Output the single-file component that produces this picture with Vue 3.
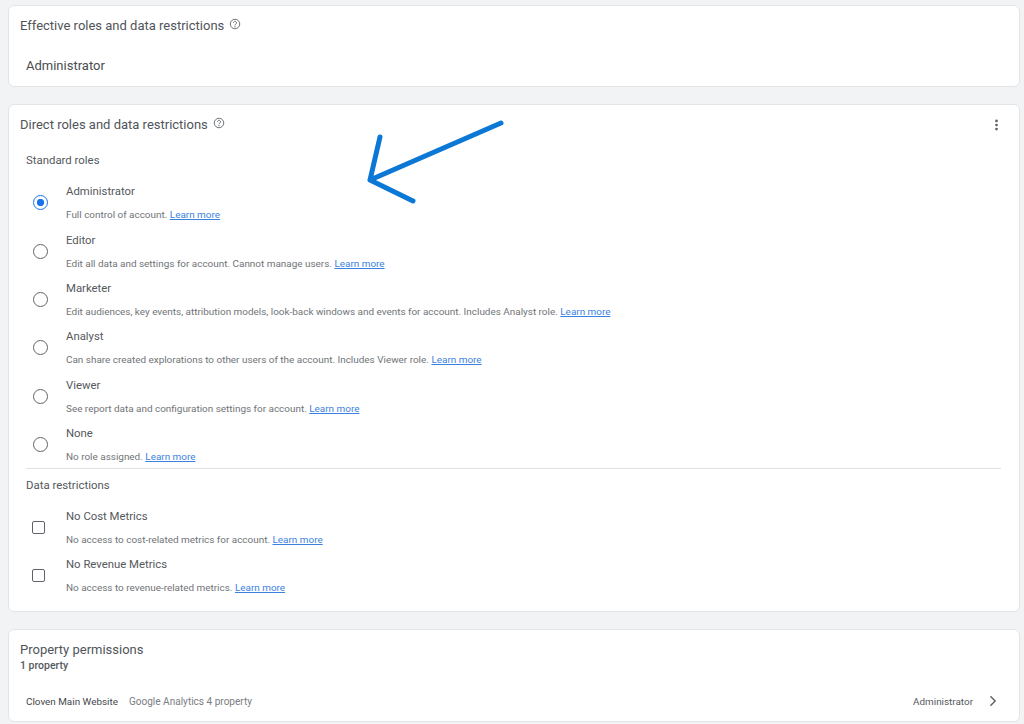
<script setup>
const roles = [
  { name: 'Administrator', desc: 'Full control of account.', checked: true },
  { name: 'Editor', desc: 'Edit all data and settings for account. Cannot manage users.' },
  { name: 'Marketer', desc: 'Edit audiences, key events, attribution models, look-back windows and events for account. Includes Analyst role.' },
  { name: 'Analyst', desc: 'Can share created explorations to other users of the account. Includes Viewer role.' },
  { name: 'Viewer', desc: 'See report data and configuration settings for account.' },
  { name: 'None', desc: 'No role assigned.' },
]
const restrictions = [
  { name: 'No Cost Metrics', desc: 'No access to cost-related metrics for account.' },
  { name: 'No Revenue Metrics', desc: 'No access to revenue-related metrics.' },
]
</script>

<template>
  <div class="page">
    <section class="card card-effective">
      <div class="title-row">
        <h2 class="title">Effective roles and data restrictions</h2>
        <svg class="help" viewBox="0 0 24 24"><circle cx="12" cy="12" r="9.5" fill="none" stroke="#5f6368" stroke-width="1.8"/><path d="M9 9.6a3 3 0 1 1 4.7 2.5c-1 .7-1.7 1.2-1.7 2.6" fill="none" stroke="#5f6368" stroke-width="1.8"/><circle cx="12" cy="17.4" r="1.2" fill="#5f6368"/></svg>
      </div>
      <div class="effective-value">Administrator</div>
    </section>

    <section class="card card-direct">
      <div class="title-row">
        <h2 class="title">Direct roles and data restrictions</h2>
        <svg class="help" viewBox="0 0 24 24"><circle cx="12" cy="12" r="9.5" fill="none" stroke="#5f6368" stroke-width="1.8"/><path d="M9 9.6a3 3 0 1 1 4.7 2.5c-1 .7-1.7 1.2-1.7 2.6" fill="none" stroke="#5f6368" stroke-width="1.8"/><circle cx="12" cy="17.4" r="1.2" fill="#5f6368"/></svg>
        <svg class="more" viewBox="0 0 4 14"><circle cx="2" cy="2.2" r="1.6"/><circle cx="2" cy="7" r="1.6"/><circle cx="2" cy="11.8" r="1.6"/></svg>
      </div>
      <h3 class="section-label">Standard roles</h3>
      <div class="options">
        <div v-for="r in roles" :key="r.name" class="option">
          <span class="radio" :class="{ on: r.checked }"></span>
          <div class="option-text">
            <div class="option-name">{{ r.name }}</div>
            <div class="option-desc">{{ r.desc }} <a class="link">Learn more</a></div>
          </div>
        </div>
      </div>
      <div class="divider"></div>
      <h3 class="section-label data-label">Data restrictions</h3>
      <div class="options data-options">
        <div v-for="r in restrictions" :key="r.name" class="option">
          <span class="checkbox"></span>
          <div class="option-text">
            <div class="option-name">{{ r.name }}</div>
            <div class="option-desc">{{ r.desc }} <a class="link">Learn more</a></div>
          </div>
        </div>
      </div>
    </section>

    <section class="card card-property">
      <h2 class="title prop-title">Property permissions</h2>
      <div class="prop-count">1 property</div>
      <div class="prop-row">
        <span class="prop-name">Cloven Main Website</span>
        <span class="prop-type">Google Analytics 4 property</span>
        <span class="prop-role">Administrator</span>
        <svg class="chevron" viewBox="0 0 10 14"><path d="M2 1.5 7.5 7 2 12.5" fill="none" stroke="#5f6368" stroke-width="1.7"/></svg>
      </div>
    </section>

    <svg class="arrow" viewBox="0 0 1024 724">
      <path d="M501 123 370 180M380 137 370 180 413 201" fill="none" stroke="#0b78d6" stroke-width="5" stroke-linecap="round" stroke-linejoin="round"/>
    </svg>
  </div>
</template>

<style>
html, body { margin: 0; background: #f1f3f4; }
</style>

<style scoped>
.page {
  position: relative;
  box-sizing: border-box;
  width: 1024px;
  height: 724px;
  padding: 5px 4px 0 8px;
  overflow: hidden;
  background: #f1f3f4;
  font-family: Roboto, "Liberation Sans", sans-serif;
  color: #3c4043;
  display: flex;
  flex-direction: column;
  gap: 17px;
}
.card {
  box-sizing: border-box;
  flex: none;
  background: #fff;
  border: 1px solid #e2e4e7;
  border-radius: 6px;
  padding: 0 12px 0 11px;
}
.card-effective { height: 82px; }
.card-direct { height: 508px; }
.card-property { height: 93px; }
.title-row {
  display: flex;
  align-items: center;
  height: 39px;
}
.title {
  margin: 0;
  font-size: 13px;
  font-weight: 400;
  line-height: 39px;
  color: #50545a;
}
.help { width: 12px; height: 12px; margin: -3px 0 0 5px; }
.more { width: 5px; height: 12px; margin: 1px 8px 0 auto; fill: #5f6368; }
.effective-value {
  margin: 11px 0 0 6px;
  font-size: 13px;
  line-height: 20px;
  color: #4a4d51;
}
.section-label {
  margin: 0 0 0 6px;
  font-size: 11.4px;
  font-weight: 400;
  line-height: 16px;
  color: #55585d;
  padding-top: 8px;
}
.options { display: flex; flex-direction: column; margin-top: 10.7px; }
.option {
  position: relative;
  display: flex;
  align-items: center;
  height: 48.3px;
}
.data-options { margin-top: 10.5px; }
.data-options .option { height: 48px; }
.option-text { margin: -1px 0 0 22px; }
.option-name {
  font-size: 11.35px;
  line-height: 16px;
  color: #55585d;
}
.option-desc {
  margin-top: 10px;
  font-size: 9.93px;
  line-height: 12px;
  color: #707478;
}
.link {
  color: #3b82e0;
  text-decoration: underline;
}
.radio {
  flex: none;
  box-sizing: border-box;
  width: 15px;
  height: 15px;
  margin-left: 13px;
  margin-right: -4px;
  border: 1.3px solid #5f6368;
  border-radius: 50%;
}
.radio.on {
  border-color: #1a73e8;
  background: radial-gradient(circle, #1a73e8 0 3.4px, transparent 3.9px);
}
.checkbox {
  flex: none;
  box-sizing: border-box;
  width: 13px;
  height: 13px;
  margin-left: 12px;
  margin-right: -1px;
  border: 1.3px solid #5f6368;
  border-radius: 2px;
}
.divider {
  height: 1px;
  margin: 0 6px;
  background: #dfe1e4;
}
.data-label { padding-top: 8px; }
.prop-title { line-height: 16px; padding-top: 12px; }
.prop-count {
  font-size: 10.5px;
  font-weight: 500;
  line-height: 12px;
  margin-top: 2px;
  color: #55585d;
}
.prop-row {
  display: flex;
  align-items: center;
  margin: 21px 0 0 6px;
  height: 16px;
  font-size: 9.9px;
}
.prop-name { color: #44474b; }
.prop-type { margin-left: 11px; font-size: 10.05px; color: #7a7d82; }
.prop-role { margin-left: auto; color: #55585d; }
.chevron { width: 10px; height: 12px; margin: 0 9px 0 15px; }
.arrow {
  position: absolute;
  left: 0;
  top: 0;
  width: 1024px;
  height: 724px;
  pointer-events: none;
}
</style>
